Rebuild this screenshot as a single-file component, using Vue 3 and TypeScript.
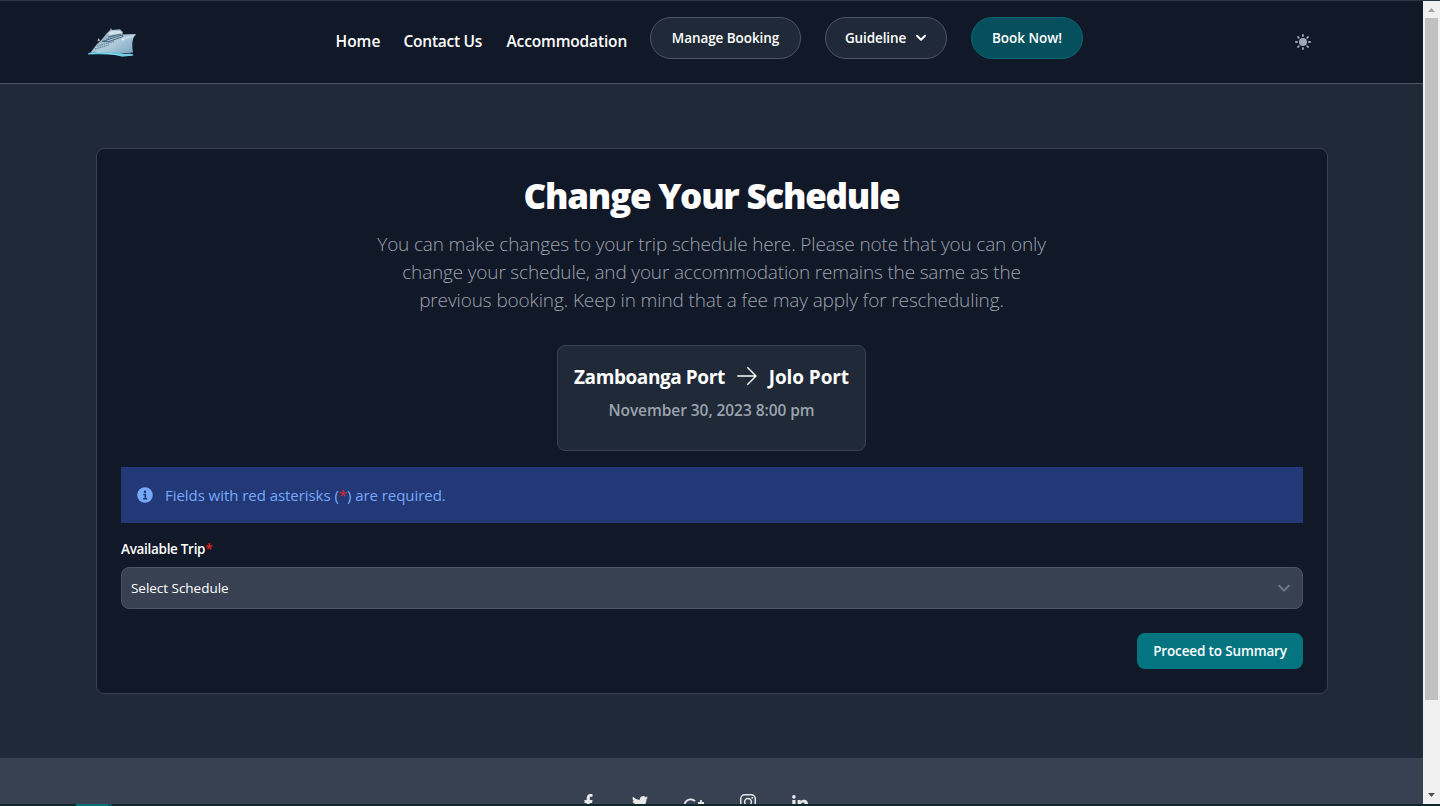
<script setup lang="ts">
interface Link { label: string; cls: string }

const links: Link[] = [
  { label: 'Home', cls: 'home' },
  { label: 'Contact Us', cls: 'contact' },
  { label: 'Accommodation', cls: 'accommodation' },
]

const intro: string[] = [
  'You can make changes to your trip schedule here. Please note that you can only',
  'change your schedule, and your accommodation remains the same as the',
  'previous booking. Keep in mind that a fee may apply for rescheduling.',
]
</script>

<template>
  <div class="window">
    <div class="view">
      <div class="page">
        <header class="header">
          <svg class="logo" viewBox="0 0 50 32" width="50" height="32">
            <defs>
              <linearGradient id="hull" x1="0" y1="0" x2="1" y2="1">
                <stop offset="0" stop-color="#7795a8" />
                <stop offset=".55" stop-color="#b0cbdb" />
                <stop offset="1" stop-color="#739fb8" />
              </linearGradient>
            </defs>
            <path d="M3 25 9 17l4-3.500L19 6l3-3 1-2 1 2 8-.8 3 3-1 2.300 14-.4c-3.500 4-4.500 9-3 18.400l-16 1.500z" fill="url(#hull)" />
            <path d="M20 6 24 3.500l8 .3 2.500 2.700-13 1.500z" fill="#d3e1e8" />
            <path d="M9.500 14.500l.8-3.500 2 2.500z" fill="#c9a9a4" />
            <path d="M14 14.500 34 8l1 1.500-14 5zM20 10l13-3" fill="none" stroke="#3d5d73" stroke-width=".9" />
            <path d="M9 19 26 14.500M7 22l14-4M18 12l10-3.500" stroke="#587b91" stroke-width="1" stroke-dasharray="1.500 .8" fill="none" />
            <path d="M34 11 48 8c-3 2-8 4-14 4.500z" fill="#c4d9e4" />
            <circle cx="35" cy="12.500" r="1" fill="#eef8fc" />
            <path d="M0 26.500q3-2.500 7-1 8-1.500 15 .3 8-1 14 1.300 5-1.300 9 .2l.5 1.200-11 1.200q-8-2.500-17-2.300Q9 27 0 27.500z" fill="#58bfdf" />
            <path d="M3 26.500q9-2 18 0t23 1.500" fill="none" stroke="#a9e2f0" stroke-width=".8" />
          </svg>
          <nav class="nav">
            <a v-for="l in links" :key="l.label" class="link" :class="l.cls">{{ l.label }}</a>
            <button class="pill manage">Manage Booking</button>
            <button class="pill guide">
              <span>Guideline</span>
              <svg viewBox="0 0 12 8" width="12" height="8"><path d="M2 1.700 6 5.700l4-4" fill="none" stroke="#fff" stroke-width="2" stroke-linecap="round" stroke-linejoin="round" /></svg>
            </button>
            <button class="pill book">Book Now!</button>
          </nav>
          <svg class="sun" viewBox="0 0 16 16" width="16" height="16">
            <circle cx="8" cy="8" r="4" fill="#a0a7b5" />
            <path d="M8 .9v1.200M8 13.900v1.200M.9 8h1.200M13.900 8h1.200M3 3l.8.8M12.200 12.200l.8.8M13 3l-.8.8M3.800 12.200l-.8.8" stroke="#9ca3af" stroke-width="1.800" stroke-linecap="round" />
          </svg>
        </header>

        <main class="main">
          <section class="card">
            <h1 class="title">Change Your Schedule</h1>
            <p class="intro">
              <span v-for="(line, i) in intro" :key="i" :class="'line' + i">{{ line }}</span>
            </p>
            <div class="trip">
              <div class="route">
                <span class="from">Zamboanga Port</span>
                <svg viewBox="0 0 20 20" width="20" height="20"><path d="M.8 10h18M10.800 1.800 19 10l-8.200 8.200" fill="none" stroke="#fff" stroke-width="1.450" stroke-linecap="round" stroke-linejoin="round" /></svg>
                <span class="to">Jolo Port</span>
              </div>
              <div class="date">November 30, 2023 8:00 pm</div>
            </div>
            <div class="alert">
              <svg viewBox="0 0 16 16" width="16" height="16">
                <circle cx="8" cy="8" r="7.800" fill="#76a9fa" />
                <circle cx="8" cy="4.700" r="1.250" fill="#233876" />
                <path d="M6.300 7.500H8.300v4M6 11.700h4.200" fill="none" stroke="#233876" stroke-width="1.600" />
              </svg>
              <span class="note">Fields with red asterisks (<i>*</i>) are required.</span>
            </div>
            <label class="label">Available Trip<i>*</i></label>
            <div class="select">
              <span>Select Schedule</span>
              <svg viewBox="0 0 12 8" width="12" height="8"><path d="M1.200 1.800 6 6.600l4.800-4.800" fill="none" stroke="#6f7888" stroke-width="2" stroke-linecap="round" stroke-linejoin="round" /></svg>
            </div>
            <button class="proceed">Proceed to Summary</button>
          </section>
        </main>

        <footer class="footer">
          <svg class="facebook" viewBox="0 0 8 16" width="9" height="16"><path d="M2.200 16V9H0V6h2.200V4.200C2.200 1.500 3.600 0 6 0h2v2.800H6.600C5.700 2.800 5.300 3.200 5.300 4v2H8l-.4 3H5.300v7z" /></svg>
          <svg class="twitter" viewBox="0 0 16 14" width="16" height="14"><path d="M5 13c6 0 9.400-5 9.400-9.300v-.4A7 7 0 0 0 16 1.600a6 6 0 0 1-1.900.5A3.300 3.300 0 0 0 15.500.3a6.500 6.500 0 0 1-2.100.8A3.300 3.300 0 0 0 7.800 4.100 9.400 9.400 0 0 1 1.100.7a3.300 3.300 0 0 0 1 4.400L.6 4.700a3.300 3.300 0 0 0 2.700 3.200 3 3 0 0 1-1.500.1 3.300 3.300 0 0 0 3.100 2.300A6.700 6.700 0 0 1 0 11.600 9.300 9.300 0 0 0 5 13z" /></svg>
          <svg class="google" viewBox="0 0 21 14" width="21" height="14"><path d="M11 3.200A6 6 0 1 0 12.600 7.500H7M17 2v6M14 5h6" fill="none" stroke="#e8e8e8" stroke-width="1.800" /></svg>
          <svg class="instagram" viewBox="0 0 16 16" width="16" height="16"><g fill="none" stroke="#e8e8e8" stroke-width="1.500"><rect x=".75" y=".75" width="14.500" height="14.500" rx="4" /><circle cx="8" cy="8" r="3.400" /></g><circle cx="12.300" cy="3.700" r="1" /></svg>
          <svg class="linkedin" viewBox="0 0 16 15" width="16" height="15"><circle cx="1.900" cy="1.900" r="1.800" /><path d="M.3 5h3.200v10H.3zM5.600 5h3v1.400C9.300 5.400 10.300 4.800 12 4.800c3 0 4 2 4 4.700V15h-3.200v-5c0-1.500-.3-2.600-1.700-2.600-1.600 0-2.200 1.100-2.200 2.600v5H5.600z" /></svg>
        </footer>
      </div>
      <div class="scrollbar">
        <svg class="up" viewBox="0 0 7 4" width="7" height="4"><path d="M0 4 3.500 0 7 4z" fill="#a3a3a3" /></svg>
        <div class="thumb"></div>
        <svg class="down" viewBox="0 0 7 4" width="7" height="4"><path d="M0 0h7L3.500 4z" fill="#505050" /></svg>
      </div>
    </div>
    <div class="taskbar"><div class="task"></div><div class="task-edge"></div></div>
  </div>
</template>

<style>
body { margin: 0; overflow: hidden; background: #1f2937; }
</style>

<style scoped>
* { box-sizing: border-box; }
.window { width: 1440px; height: 806px; overflow: hidden; display: flex; flex-direction: column; border-top: 1px solid #2f3443; color: #fff; font-family: "Open Sans", "Noto Sans", sans-serif; white-space: nowrap; }
.view { height: 803px; display: flex; overflow: hidden; }
.page { width: 1423px; height: 803px; overflow: hidden; background: #1f2937; }
button { font-family: inherit; color: #fff; padding: 0; margin: 0; white-space: nowrap; }
i { font-style: normal; color: #e02424; }
svg { display: block; flex: none; }

.header { height: 83px; display: flex; align-items: flex-start; background: #111827; border-bottom: 1px solid #4b5563; }
.logo { margin: 26px 0 0 88px; }
.nav { width: 747.500px; margin: 16px 0 0 197.500px; height: 42px; display: flex; align-items: flex-start; gap: 24px; }
.link { margin-top: 12px; line-height: 24px; font-size: 15.5px; font-weight: 600; flex: none; }
.home { width: 44px; }
.contact { width: 79px; letter-spacing: -.25px; }
.accommodation { width: 119.500px; letter-spacing: -.15px; }
.pill { height: 42px; border: 1px solid #4b5563; border-radius: 21px; background: #1f2937; font-size: 13.5px; font-weight: 600; letter-spacing: -.07px; display: flex; align-items: center; justify-content: center; flex: none; }
.manage { width: 151px; }
.guide { width: 122px; gap: 9px; letter-spacing: -.12px; }
.book { width: 112px; background: #05505c; border-color: #036672; letter-spacing: 0; }
.sun { margin: 33px 0 0 212px; }

.main { height: 674px; padding: 64px 95px 0 96px; }
.card { width: 1232px; height: 546px; border: 1px solid #374151; border-radius: 8px; background: #111827; padding: 0 24px; display: flex; flex-direction: column; align-items: center; }
.title { margin: 27px 1px 0 0; font-size: 35px; line-height: 40px; font-weight: 800; letter-spacing: -1.250px; }
.intro { margin: 14px 1px 0 0; display: flex; flex-direction: column; align-items: center; color: #9ca3af; font-size: 19px; font-weight: 300; line-height: 28px; }
.line0 { letter-spacing: -.15px; }
.line1 { letter-spacing: -.17px; }
.line2 { letter-spacing: -.12px; }
.trip { width: 309px; height: 106px; margin: 31px 1px 0 0; border: 1px solid #374151; border-radius: 8px; background: #1f2937; display: flex; flex-direction: column; align-items: center; }
.route { margin-top: 15px; height: 30px; width: 275px; display: flex; align-items: center; justify-content: space-between; font-size: 19px; font-weight: 700; }
.route span { padding-top: 2px; }
.from { letter-spacing: -.42px; }
.to { letter-spacing: -.1px; }
.date { margin-top: 7px; line-height: 24px; font-size: 15.5px; font-weight: 600; letter-spacing: -.06px; color: #9ca3af; }
.alert { align-self: stretch; height: 56px; margin-top: 16px; padding-left: 16px; background: #233876; color: #76a9fa; display: flex; align-items: center; gap: 12px; font-size: 15px; letter-spacing: -.05px; }
.label { align-self: flex-start; margin-top: 16px; line-height: 20px; font-size: 13.5px; font-weight: 600; letter-spacing: -.3px; }
.select { align-self: stretch; height: 42px; margin-top: 8px; padding: 0 12px 0 9px; border: 1px solid #4b5563; border-radius: 8px; background: #374151; display: flex; align-items: center; justify-content: space-between; font-size: 13.5px; letter-spacing: -.03px; }
.proceed { align-self: flex-end; width: 166px; height: 36px; margin-top: 24px; border: 0; border-radius: 8px; background: #047481; font-size: 13.5px; font-weight: 600; letter-spacing: -.14px; }

.footer { height: 60px; background: #374151; display: flex; align-items: flex-start; fill: #e8e8e8; }
.facebook { margin: 36px 0 0 583.500px; }
.twitter { margin: 38px 0 0 39.500px; }
.google { margin: 40px 0 0 36px; }
.instagram { margin: 36px 0 0 35px; }
.linkedin { margin: 37px 0 0 36px; }

.scrollbar { width: 17px; height: 803px; background: #f1f1f1; display: flex; flex-direction: column; align-items: center; }
.up { margin-top: 7px; }
.thumb { width: 13px; height: 682px; margin-top: 6px; background: #c1c1c1; }
.down { margin-top: 93px; }
.taskbar { height: 2px; background: #10282b; display: flex; padding-left: 76px; }
.task { width: 32px; height: 2px; background: #047078; }
.task-edge { width: 4px; height: 2px; background: #075057; }
</style>
